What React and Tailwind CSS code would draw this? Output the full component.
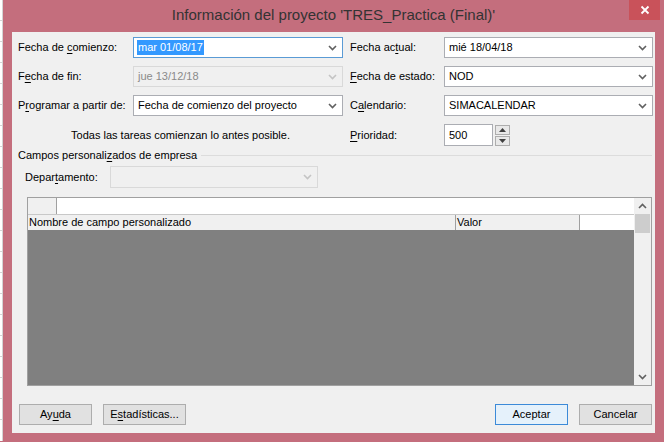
import React from "react";

const font = { fontFamily: '"Liberation Sans", Arial, sans-serif' };

function Chevron({ up = false, color = "#606060" }) {
  return (
    <svg width="9" height="6" viewBox="0 0 9 6">
      <path
        d={up ? "M1 5 L4.5 1.5 L8 5" : "M1 1 L4.5 4.5 L8 1"}
        fill="none"
        stroke={color}
        strokeWidth="1.6"
      />
    </svg>
  );
}

function U({ children }) {
  return <span className="underline underline-offset-2">{children}</span>;
}

function Combo({ value, focused = false, disabled = false, selected = false, className = "" }) {
  const border = focused ? "border-[#5a9bd5]" : disabled ? "border-[#d9d9d9]" : "border-[#abadb3]";
  const bg = disabled ? "bg-[#f0f0f0]" : "bg-white";
  return (
    <div className={`h-[21px] shrink-0 border ${border} ${bg} flex items-center justify-between pl-[3px] pr-[5px] ${className}`}>
      {selected ? (
        <span className="bg-[#3399ff] text-white px-[1px] leading-[15px]">{value}</span>
      ) : (
        <span className={`${disabled ? "text-[#8a8a8a]" : "text-black"} pl-[1px] whitespace-nowrap`}>{value}</span>
      )}
      <Chevron color={disabled ? "#c4c4c4" : "#606060"} />
    </div>
  );
}

function Btn({ children, primary = false, className = "" }) {
  return (
    <div
      className={`h-[21px] shrink-0 flex items-center justify-center border ${
        primary ? "border-[#3c8ad8] bg-[#e5f1fb]" : "border-[#adadad] bg-[#e1e1e1]"
      } ${className}`}
    >
      {children}
    </div>
  );
}

export default function App() {
  return (
    <div className="w-[664px] h-[444px] bg-white flex flex-col overflow-hidden text-[11px] text-black whitespace-nowrap" style={font}>
      <div className="flex flex-1 min-h-0">
        {/* underlying sheet on the left */}
        <div className="w-[3px] shrink-0 flex flex-col border-r border-[#d4d4d4]">
          {Array.from({ length: 20 }).map((_, i) => (
            <div key={i} className="h-[21px] shrink-0 border-b border-[#d4d4d4]" />
          ))}
        </div>
        {/* dialog */}
        <div className="flex-1 bg-[#c46e7d] flex flex-col pl-[9px] pr-[9px] pb-[8px] min-h-0">
          <div className="h-[32px] shrink-0 relative flex items-center justify-center">
            <span className="text-[15px] text-[#333333] -mt-[1px]">
              Información del proyecto 'TRES_Practica (Final)'
            </span>
            <div className="absolute right-[-5px] top-0 w-[31px] h-[20px] bg-[#c9525a] flex items-center justify-center">
              <svg width="10" height="10" viewBox="0 0 10 10">
                <path d="M1.5 1.5 L8.5 8.5 M8.5 1.5 L1.5 8.5" stroke="white" strokeWidth="1.8" />
              </svg>
            </div>
          </div>

          <div className="flex-1 min-h-0 bg-[#f0f0f0] flex flex-col pl-[6px] pr-[2px] pt-[5px]">
            {/* top grid */}
            <div className="flex flex-col gap-[8px] shrink-0">
              <div className="flex items-center">
                <span className="w-[115px] shrink-0">Fecha de <U>c</U>omienzo:</span>
                <Combo value="mar 01/08/17" focused selected className="w-[210px]" />
                <span className="w-[94px] shrink-0 ml-[7px]">Fecha ac<U>t</U>ual:</span>
                <Combo value="mié 18/04/18" className="w-[209px]" />
              </div>
              <div className="flex items-center">
                <span className="w-[115px] shrink-0">F<U>e</U>cha de fin:</span>
                <Combo value="jue 13/12/18" disabled className="w-[210px]" />
                <span className="w-[94px] shrink-0 ml-[7px]"><U>F</U>echa de estado:</span>
                <Combo value="NOD" className="w-[209px]" />
              </div>
              <div className="flex items-center">
                <span className="w-[115px] shrink-0">P<U>r</U>ogramar a partir de:</span>
                <Combo value="Fecha de comienzo del proyecto" className="w-[210px]" />
                <span className="w-[94px] shrink-0 ml-[7px]">C<U>a</U>lendario:</span>
                <Combo value="SIMACALENDAR" className="w-[209px]" />
              </div>
              <div className="flex items-center h-[22px]">
                <span className="w-[325px] shrink-0 text-center">Todas las tareas comienzan lo antes posible.</span>
                <span className="w-[94px] shrink-0 ml-[7px]"><U>P</U>rioridad:</span>
                <div className="w-[49px] h-[22px] border border-[#abadb3] bg-white flex items-center pl-[4px]">500</div>
                <div className="ml-[2px] flex flex-col gap-[1px]">
                  <div className="w-[15px] h-[10px] border border-[#adadad] bg-[#e8e8e8] flex items-center justify-center">
                    <svg width="7" height="4" viewBox="0 0 7 4"><path d="M0 4 L3.5 0 L7 4 Z" fill="#404040" /></svg>
                  </div>
                  <div className="w-[15px] h-[10px] border border-[#adadad] bg-[#e8e8e8] flex items-center justify-center">
                    <svg width="7" height="4" viewBox="0 0 7 4"><path d="M0 0 L3.5 4 L7 0 Z" fill="#404040" /></svg>
                  </div>
                </div>
              </div>
            </div>

            {/* group header */}
            <div className="flex items-center mt-[2px] h-[15px] shrink-0">
              <span className="pr-[4px]">Campos personali<U>z</U>ados de empresa</span>
              <div className="flex-1 border-t border-[#dcdcdc] mr-[1px]" />
            </div>

            <div className="flex items-center mt-[3px] pl-[7px] shrink-0">
              <span className="w-[85px] shrink-0">Depar<U>t</U>amento:</span>
              <Combo value="" disabled className="w-[208px] h-[22px]" />
            </div>

            {/* table */}
            <div className="ml-[9px] mr-[1px] mt-[9px] h-[189px] shrink-0 border border-[#a0a0a0] flex">
              <div className="flex-1 flex flex-col">
                <div className="h-[16px] flex bg-white">
                  <div className="w-[29px] bg-[#f0f0f0] border-r border-[#a0a0a0]" />
                </div>
                <div className="h-[16px] flex bg-[#f0f0f0] border-t border-[#c8c8c8] leading-[15px]">
                  <div className="w-[428px] pl-[1px] border-r border-[#a0a0a0]">Nombre de campo personalizado</div>
                  <div className="w-[124px] pl-[1px] border-r border-[#a0a0a0]">Valor</div>
                  <div className="flex-1 bg-white" />
                </div>
                <div className="flex-1 bg-[#808080]" />
              </div>
              <div className="w-[17px] bg-[#f0f0f0] flex flex-col items-center">
                <div className="h-[16px] flex items-center justify-center">
                  <Chevron up color="#606060" />
                </div>
                <div className="w-[15px] h-[19px] bg-[#cdcdcd]" />
                <div className="flex-1" />
                <div className="h-[16px] flex items-center justify-center">
                  <Chevron color="#606060" />
                </div>
              </div>
            </div>

            {/* buttons */}
            <div className="flex items-center mt-[18px] pl-[1px] pr-[1px] shrink-0">
              <Btn className="w-[73px]">Ay<U>u</U>da</Btn>
              <Btn className="w-[83px] ml-[11px]">E<U>s</U>tadísticas...</Btn>
              <div className="flex-1" />
              <Btn primary className="w-[73px]">Aceptar</Btn>
              <Btn className="w-[73px] ml-[11px]">Cancelar</Btn>
            </div>
          </div>
        </div>
      </div>
      <div className="h-[3px] shrink-0 bg-white border-t border-[#c46e7d]" />
    </div>
  );
}
